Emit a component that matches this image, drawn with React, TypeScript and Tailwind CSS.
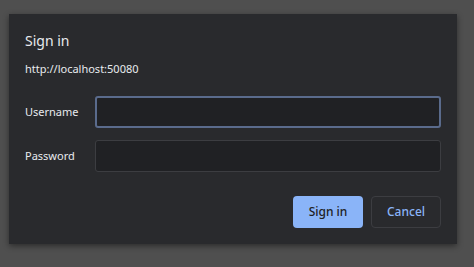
export default function App() {
  const font = { fontFamily: '"Noto Sans", "Open Sans", sans-serif' };
  return (
    <div className="w-[474px] h-[267px] bg-[#4f4f4f] pt-[14px] pl-[9px]" style={font}>
      <div className="w-[448px] h-[230px] bg-[#292a2d] shadow-[0_2px_6px_rgba(0,0,0,0.45)] px-4 pt-[17px] pb-4 flex flex-col">
        <div className="text-[14px] leading-[20px] text-[#e8eaed]">Sign in</div>
        <div className="mt-[10px] text-[11px] leading-[16px] text-[#e8eaed]">http://localhost:50080</div>
        <div className="mt-[19px] flex flex-col gap-3">
          <div className="flex items-center">
            <label className="w-[70px] text-[11px] text-[#e8eaed]">Username</label>
            <div className="flex-1 h-8 rounded-[3px] border-2 border-[#5a6b8c] bg-[#202124]" />
          </div>
          <div className="flex items-center">
            <label className="w-[70px] text-[11px] text-[#e8eaed]">Password</label>
            <div className="flex-1 h-8 rounded-[3px] border border-[#3c3d41] bg-[#202124]" />
          </div>
        </div>
        <div className="mt-auto flex justify-end gap-2">
          <button className="w-[70px] h-8 rounded-[4px] bg-[#8ab4f8] text-[12px] font-medium text-[#202124]">Sign in</button>
          <button className="w-[70px] h-8 rounded-[4px] border border-[#3c3d41] text-[12px] font-medium text-[#8ab4f8]">Cancel</button>
        </div>
      </div>
    </div>
  );
}
